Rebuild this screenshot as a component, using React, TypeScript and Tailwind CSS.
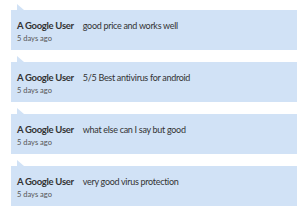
const reviews = [
  { author: "A Google User", text: "good price and works well", when: "5 days ago" },
  { author: "A Google User", text: "5/5 Best antivirus for android", when: "5 days ago" },
  { author: "A Google User", text: "what else can I say but good", when: "5 days ago" },
  { author: "A Google User", text: "very good virus protection", when: "5 days ago" },
];

export default function App() {
  return (
    <div className="w-[300px] h-[210px] bg-white pl-[11px] pr-[3px] pt-[4px] overflow-hidden" style={{ fontFamily: 'Lato, sans-serif' }}>
      <div className="flex flex-col gap-[6px]">
        {reviews.map((r, i) => (
          <div key={i} className="flex flex-col">
            <div className="h-[6px] ml-[6px] w-[7px] bg-[#d1e2f6] [clip-path:polygon(0_0,100%_100%,0_100%)]" />
            <div className="h-[40px] bg-[#d1e2f6] px-[6px] pt-[10px]">
              <div className="flex items-baseline leading-[12px] text-[#333]">
                <span className="font-bold text-[9.5px] tracking-[-0.3px] mr-[9px] shrink-0">{r.author}</span>
                <span className="text-[9px] tracking-[-0.3px]">{r.text}</span>
              </div>
              <div className="mt-[2px] text-[7.5px] leading-[10px] text-[#555]">{r.when}</div>
            </div>
          </div>
        ))}
      </div>
    </div>
  );
}
